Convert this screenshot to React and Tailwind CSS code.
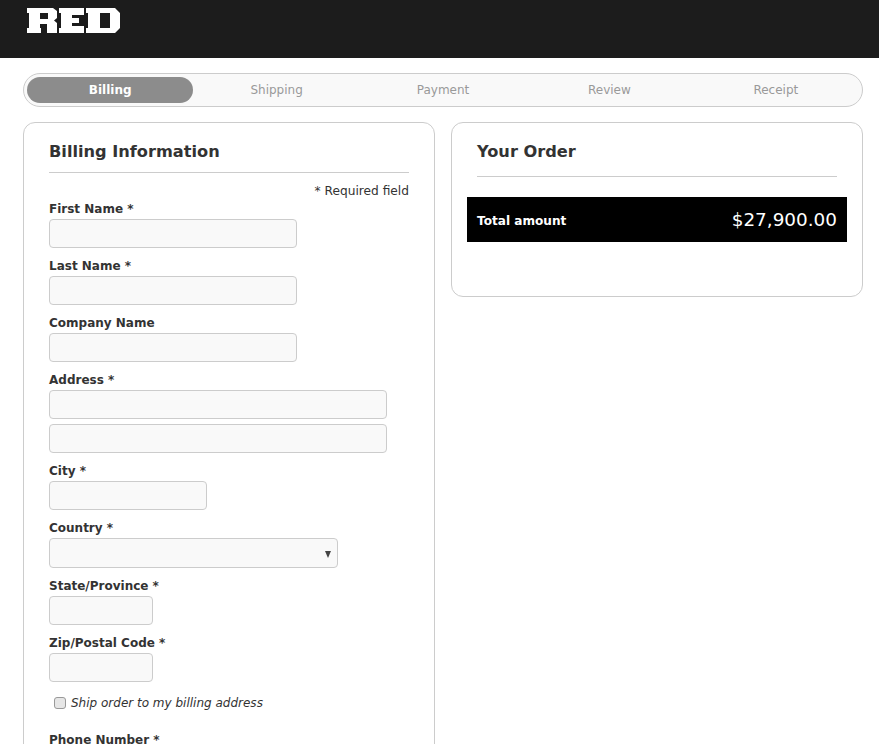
import React from "react";

const Field = ({ label, w, mt = "mt-0" }) => (
  <div className={`flex flex-col ${mt}`}>
    <label className="h-[20px] text-[12px] leading-[22px] font-bold text-[#333]">{label}</label>
    <input className={`h-[29px] ${w} mt-px rounded-[4px] border border-[#ccc] bg-[#f9f9f9] outline-none`} />
  </div>
);

const steps = ["Billing", "Shipping", "Payment", "Review", "Receipt"];

export default function App() {
  return (
    <div className="h-[744px] overflow-hidden bg-white font-['DejaVu_Sans',Verdana,sans-serif] text-[#333]">
      <header className="h-[58px] bg-[#1c1c1c] pl-[27px] pt-[8px]">
        <svg className="block" width="94" height="25" viewBox="0 0 94 25" fill="#fff" fillRule="evenodd">
          <path d="M0 0H26L30 3V10L27 12.500L30 15V25H20V16H13V20H14V25H0V20H2V5H0ZM13 5V11H21V5Z" />
          <path d="M32 0H57V7H45V10H52V15H45V18H57V25H32V20H34V5H32Z" />
          <path d="M59 0H88L93 5V20L88 25H59V20H61V5H59ZM73 5V20H83V5Z" />
        </svg>
      </header>

      <main className="pr-[16px] pl-[23px] pt-[15px]">
        <nav className="flex h-[34px] items-center rounded-full border border-[#ccc] bg-[#f9f9f9] px-[3px]">
          {steps.map((s, i) => (
            <div
              key={s}
              className={
                i === 0
                  ? "flex h-[26px] flex-1 items-center justify-center rounded-full bg-[#8c8c8c] text-[12px] font-bold text-white"
                  : "flex h-[26px] flex-1 items-center justify-center text-[12px] text-[#999]"
              }
            >
              {s}
            </div>
          ))}
        </nav>

        <div className="mt-[15px] flex items-start gap-[16px]">
          <section className="h-[700px] w-[412px] shrink-0 rounded-[12px] border border-[#ccc] px-[25px]">
            <h2 className="mt-[16px] h-[26px] text-[16.2px] leading-[26px] font-bold text-[#333]">Billing Information</h2>
            <div className="mt-[7px] border-t border-[#ccc]" />
            <p className="mt-[7px] h-[20px] text-right text-[12.2px] leading-[22px]">* Required field</p>
            <form className="flex flex-col">
              <Field label="First Name *" w="w-[248px]" mt="mt-[-2px]" />
              <Field label="Last Name *" w="w-[248px]" mt="mt-[7px]" />
              <Field label="Company Name" w="w-[248px]" mt="mt-[7px]" />
              <Field label="Address *" w="w-[338px]" mt="mt-[7px]" />
              <input className="mt-[5px] h-[29px] w-[338px] rounded-[4px] border border-[#ccc] bg-[#f9f9f9]" />
              <Field label="City *" w="w-[158px]" mt="mt-[7px]" />
              <div className="mt-[7px] flex flex-col">
                <label className="h-[20px] text-[12px] leading-[22px] font-bold">Country *</label>
                <div className="relative mt-px h-[30px] w-[289px] rounded-[4px] border border-[#ccc] bg-[#f9f9f9]">
                  <span className="absolute top-[12px] right-[6px] h-0 w-0 border-x-[3.5px] border-t-[7px] border-x-transparent border-t-[#444]" />
                </div>
              </div>
              <Field label="State/Province *" w="w-[104px]" mt="mt-[7px]" />
              <Field label="Zip/Postal Code *" w="w-[104px]" mt="mt-[7px]" />
              <label className="mt-[11px] flex h-[20px] items-center pl-[5px] text-[12px] leading-[20px] italic">
                <span className="h-[12px] w-[12px] rounded-[3px] border border-[#999] bg-[#e6e6e6]" />
                <span className="ml-[5px]">Ship order to my billing address</span>
              </label>
              <label className="mt-[16px] h-[20px] text-[12px] leading-[22px] font-bold">Phone Number *</label>
            </form>
          </section>

          <section className="h-[175px] w-[412px] shrink-0 rounded-[12px] border border-[#ccc] px-[15px]">
            <h2 className="mt-[16px] h-[26px] px-[10px] text-[16.2px] leading-[26px] font-bold">Your Order</h2>
            <div className="mx-[10px] mt-[11px] border-t border-[#ccc]" />
            <div className="mt-[20px] flex h-[45px] items-center justify-between bg-black px-[10px] text-white">
              <span className="mt-[3px] text-[12.1px] font-bold">Total amount</span>
              <span className="text-[18.4px]">$27,900.00</span>
            </div>
          </section>
        </div>
      </main>
    </div>
  );
}
